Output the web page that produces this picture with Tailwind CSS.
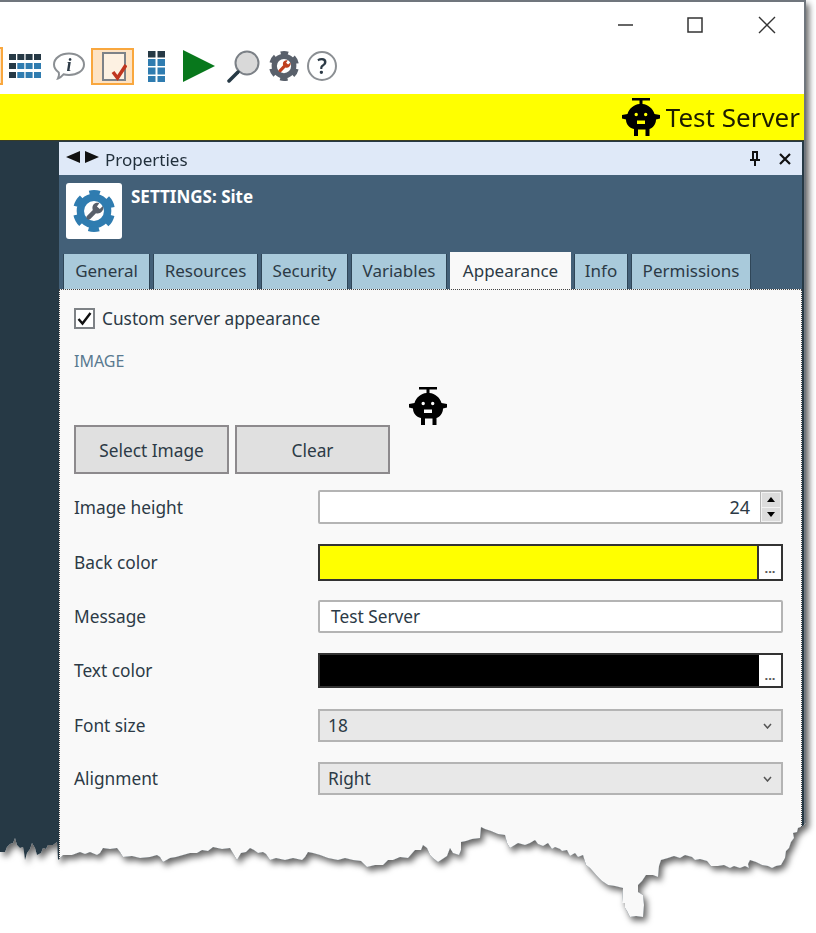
<!DOCTYPE html>
<html lang="en">
<head>
    <meta charset="UTF-8">
    <title>Settings: Site</title>
    <script src="https://cdn.jsdelivr.net/npm/@tailwindcss/browser@4"></script>
</head>
<body class="bg-white overflow-hidden font-['Noto_Sans',sans-serif] text-[#2c3a46]">
    <!-- shared shapes -->
    <svg width="0" height="0" class="absolute">
        <defs>
            <clipPath id="torn" clipPathUnits="userSpaceOnUse">
                <path d="M0 0H806V823L803 826L798 828L797 832L793 833L794 838L791 842L789 848L786 851L785 858L781 865L776 866L772 868L768 866L762 865L756 862L750 860L748 864L749 868L745 866L740 868L734 866L730 868L724 865L718 866L711 866L707 861L700 859L695 860L692 857L685 855L680 858L674 856L668 858L661 860L659 866L658 877L653 875L646 875L642 881L638 885L638 892L643 895L644 905L643 917L636 916L630 917L627 911L625 908L625 903L622 903L623 888L615 886L608 885L602 881L597 876L590 868L586 865L583 855L578 857L575 853L570 856L567 850L562 851L560 849L555 847L552 849L548 843L543 846L538 844L535 840L530 843L525 845L518 843L510 848L507 843L505 835L498 834L491 831L485 829L481 827L480 838L472 839L466 841L461 842L461 850L459 855L453 853L450 848L447 856L438 862L433 858L430 855L427 848L423 845L421 850L415 850L408 858L400 857L393 860L388 860L383 865L375 865L367 867L361 861L353 860L345 858L338 860L328 858L320 855L313 853L308 852L305 857L302 860L293 858L285 860L276 858L270 860L266 854L263 852L258 853L254 850L250 848L246 852L241 853L237 860L234 855L230 848L222 849L213 847L208 851L202 850L197 853L190 853L183 855L176 857L170 858L163 862L160 857L157 855L150 857L140 858L132 856L123 857L120 852L117 848L110 849L103 848L100 853L97 855L90 852L85 854L80 852L72 855L63 855L58 860L57 842L53 845L48 845L46 849L43 848L41 853L37 855L35 848L32 843L30 849L27 853L25 860L24 852L23 847L20 848L17 845L15 838L13 843L10 844L7 847L5 852L0 852Z"/>
            </clipPath>
            <symbol id="robot" viewBox="0 0 38 38">
                <path fill-rule="evenodd" d="M10 0H28V2.500H20.500V6C26 6.500 31 10.500 32.500 16L38 17V20.500L34 21.500C34 26 31 30 27.500 31V38H23.500V31.500H16V38H12V31C7 30 4 26 4 21.500L0 20.500V17L5.500 16C7 10.500 12 6.500 17.500 6V2.500H10ZM12.500 16.500A1.700 1.700 0 1 0 15.900 16.500A1.700 1.700 0 1 0 12.500 16.500ZM22 16.500A1.700 1.700 0 1 0 25.400 16.500A1.700 1.700 0 1 0 22 16.500ZM15 22.500H23V26H15Z"/>
            </symbol>
            <symbol id="gear" viewBox="0 0 40 40">
                <circle cx="20" cy="20" r="13" fill="none" stroke="currentColor" stroke-width="7"/>
                <circle cx="20" cy="20" r="17.500" fill="none" stroke="currentColor" stroke-width="5" stroke-dasharray="10 8.330" stroke-dashoffset="14.160"/>
            </symbol>
            <symbol id="wrench" viewBox="0 0 40 40">
                <path d="M25 12.500C22 11.500 18.500 13.500 18.500 17C18.500 17.800 18.600 18.500 18.900 19.100L13.500 24.500C12.500 25.500 12.500 26.900 13.500 27.700C14.300 28.500 15.500 28.500 16.500 27.500L21.900 22.100C25.500 23.300 28.800 20.500 28.800 17C28.800 16.300 28.700 15.700 28.500 15.200L25.500 18L22.800 15.700Z"/>
            </symbol>
        </defs>
    </svg>

    <div class="w-[816px] h-[933px] [filter:drop-shadow(3px_4px_3px_rgba(0,0,0,0.6))]">
        <div class="w-[806px] h-[933px] flex flex-col border-t-2 border-r-2 border-[#70767d] bg-white [clip-path:url(#torn)]">

            <!-- title bar + toolbar -->
            <div class="h-[92px] relative shrink-0">
                <div class="absolute top-[14px] left-[617px] flex">
                    <svg class="w-[17px] h-[18px] mr-[52px]" viewBox="0 0 17 18"><path d="M1 9H16" stroke="#333" stroke-width="1.500"/></svg>
                    <svg class="w-[18px] h-[18px] mr-[54px]" viewBox="0 0 18 18"><rect x="2" y="2" width="14" height="14" fill="none" stroke="#333" stroke-width="1.500"/></svg>
                    <svg class="w-[18px] h-[18px]" viewBox="0 0 18 18"><path d="M1 1L17 17M17 1L1 17" stroke="#333" stroke-width="1.400"/></svg>
                </div>
                <div class="absolute left-0 top-[45px] flex items-center h-[38px]">
                    <div class="w-[3px] h-[38px] bg-[#fde3c4] border-r-2 border-y-2 border-[#f9a73e] mr-[6px]"></div>
                    <svg class="w-[32px] h-[24px] mr-[12px]" viewBox="0 0 32 24">
                        <path fill="#263945" d="M0 0h7v6H0zM8.300 0h7v6h-7zM16.600 0h7v6h-7zM25 0h7v6h-7zM0 9h7v6H0zM0 18h7v6H0z"/>
                        <path fill="#2f7cb0" d="M8.300 9h7v6h-7zM16.600 9h7v6h-7zM25 9h7v6h-7zM8.300 18h7v6h-7zM16.600 18h7v6h-7zM25 18h7v6h-7z"/>
                    </svg>
                    <svg class="w-[32px] h-[28px] mr-[6px]" viewBox="0 0 32 28">
                        <path d="M16 1.500C24 1.500 31 6 31 12.500C31 19 24 23 16 23C14 23 12 22.800 10.500 22.300C9 24 7 26 5 26.500C6 24.500 6.300 22 5.800 20.500C3 18.500 1 16 1 12.500C1 6 8 1.500 16 1.500Z" fill="#fff" stroke="#8b8f93" stroke-width="2"/>
                        <text x="16" y="19" text-anchor="middle" font-family="Liberation Serif" font-style="italic" font-weight="700" font-size="18" fill="#2c3a46">i</text>
                    </svg>
                    <div class="w-[43px] h-[37px] bg-[#fde3c4] border-2 border-[#f9a73e] flex items-center justify-center mr-[14px]">
                        <svg class="w-[28px] h-[32px]" viewBox="0 0 28 32">
                            <rect x="4" y="3" width="22" height="27" fill="#fdf1e2" stroke="#7d8288" stroke-width="2"/>
                            <path d="M14 22L18.500 28L27 15" fill="none" stroke="#c0351f" stroke-width="3.500"/>
                        </svg>
                    </div>
                    <svg class="w-[17px] h-[31px] mr-[18px]" viewBox="0 0 17 31">
                        <path fill="#263945" d="M0 0h7.500v6.500H0zM9.500 0H17v6.500H9.500z"/>
                        <path fill="#2f7cb0" d="M0 8h7.500v7H0zM9.500 8H17v7H9.500zM0 16.500h7.500v7H0zM9.500 16.500H17v7H9.500zM0 25h7.500v6H0zM9.500 25H17v6H9.500z"/>
                    </svg>
                    <svg class="w-[32px] h-[32px] mr-[12px]" viewBox="0 0 32 32"><path d="M0 0L32 16L0 32Z" fill="#08781c"/></svg>
                    <svg class="w-[33px] h-[33px] mr-[9px]" viewBox="0 0 33 33">
                        <circle cx="20" cy="13" r="11.500" fill="#d9d9d9" stroke="#7b8086" stroke-width="2"/>
                        <path d="M11 22L2 31" stroke="#263945" stroke-width="3.500" stroke-linecap="round"/>
                    </svg>
                    <div class="relative w-[30px] h-[30px] mr-[8px] text-[#59606b]">
                        <svg class="w-[30px] h-[30px]"><use href="#gear"/></svg>
                        <svg class="absolute inset-0 w-[30px] h-[30px] fill-[#c0401f]"><use href="#wrench"/></svg>
                    </div>
                    <div class="w-[30px] h-[30px] rounded-full border-2 border-[#8b8f93] flex items-center justify-center text-[21px] font-semibold leading-none">?</div>
                </div>
            </div>

            <!-- server banner -->
            <div class="h-[47px] shrink-0 bg-[#ffff00] border-b border-[#3a3d22] flex items-center justify-end pr-[4px] gap-[6px] text-black">
                <svg class="w-[38px] h-[38px]"><use href="#robot"/></svg>
                <span class="text-[26px] leading-none text-[#1c1c00]">Test Server</span>
            </div>

            <!-- app body -->
            <div class="flex-1 bg-[#263945] pl-[59px] pr-[2px] pt-[1px]">
                <div class="h-full flex flex-col">
                    <!-- properties header -->
                    <div class="h-[33px] shrink-0 bg-[#dfe9f8] flex items-center pl-[7px] pr-[11px] text-[#22303c]">
                        <svg class="w-[33px] h-[12px] mr-[6px] -mt-[3px]" viewBox="0 0 33 12"><path d="M14 0V12L0 6ZM19 0V12L33 6Z" fill="#111"/></svg>
                        <span class="text-[17px] leading-none mt-[2px]">Properties</span>
                        <svg class="ml-auto w-[12px] h-[17px] mr-[18px] -mt-[1px]" viewBox="0 0 12 17"><path d="M3 1H9V9H11V11H7V16H5V11H1V9H3ZM5 3V9H7V3Z" fill="#111" fill-rule="evenodd"/></svg>
                        <svg class="w-[12px] h-[12px]" viewBox="0 0 12 12"><path d="M1 1L11 11M11 1L1 11" stroke="#111" stroke-width="2.200"/></svg>
                    </div>

                    <!-- settings header -->
                    <div class="h-[114px] shrink-0 bg-[#436078] flex flex-col justify-between">
                        <div class="flex pl-[7px] pt-[8px]">
                            <div class="relative w-[56px] h-[56px] rounded-[3px] bg-white flex items-center justify-center text-[#2f7cb0]">
                                <svg class="w-[42px] h-[42px]"><use href="#gear"/></svg>
                                <svg class="absolute w-[42px] h-[42px] fill-[#59606b]"><use href="#wrench"/></svg>
                            </div>
                            <span class="ml-[9px] mt-[2px] text-[17px] font-bold text-white leading-[24px]">SETTINGS: Site</span>
                        </div>
                        <div class="flex pl-[4px] gap-[3px] text-[17px] leading-none">
                            <div class="w-[87px] h-[35px] pb-[3px] bg-[#a9cadb] border-x border-[#2f4658] flex items-center justify-center">General</div>
                            <div class="w-[105px] h-[35px] pb-[3px] bg-[#a9cadb] border-x border-[#2f4658] flex items-center justify-center">Resources</div>
                            <div class="w-[87px] h-[35px] pb-[3px] bg-[#a9cadb] border-x border-[#2f4658] flex items-center justify-center">Security</div>
                            <div class="w-[96px] h-[35px] pb-[3px] bg-[#a9cadb] border-x border-[#2f4658] flex items-center justify-center">Variables</div>
                            <div class="w-[121px] h-[37px] -mt-[2px] pb-[1px] bg-[#f9f9f9] flex items-center justify-center">Appearance</div>
                            <div class="w-[54px] h-[35px] pb-[3px] bg-[#a9cadb] border-x border-[#2f4658] flex items-center justify-center">Info</div>
                            <div class="w-[120px] h-[35px] pb-[3px] bg-[#a9cadb] border-x border-[#2f4658] flex items-center justify-center">Permissions</div>
                        </div>
                    </div>

                    <!-- appearance form -->
                    <div class="flex-1 bg-[#f9f9f9] border-t border-x border-dotted border-[#444] pl-[14px] pt-[17px] text-[17.300px] leading-none">
                        <label class="flex items-center h-[22px]">
                            <span class="w-[21px] h-[21px] bg-white border-2 border-[#7e8286] flex items-center justify-center mr-[7px]">
                                <svg class="w-[15px] h-[15px]" viewBox="0 0 15 15"><path d="M1.500 8L5.500 12.500L13.500 2" fill="none" stroke="#111" stroke-width="2.400"/></svg>
                            </span>
                            <span class="mt-[2px]">Custom server appearance</span>
                        </label>
                        <div class="mt-[24px] text-[16px] text-[#5a7a90]">IMAGE</div>
                        <div class="pl-[335px] mt-[18px] h-[38px]">
                            <svg class="w-[38px] h-[38px] text-black"><use href="#robot"/></svg>
                        </div>
                        <div class="flex gap-[6px]">
                            <div class="w-[155px] h-[49px] pt-[2px] bg-[#e0e0e0] border-2 border-[#8d8a8d] flex items-center justify-center">Select Image</div>
                            <div class="w-[155px] h-[49px] pt-[2px] bg-[#e0e0e0] border-2 border-[#8d8a8d] flex items-center justify-center">Clear</div>
                        </div>

                        <div class="mt-[16px] grid grid-cols-[244px_465px] items-center">
                            <div class="mt-[2px]">Image height</div>
                            <div class="h-[34px] flex bg-white border-2 border-[#b4b4b4] rounded-[2px]">
                                <div class="flex-1 flex items-center justify-end pr-[10px] text-[18px]">24</div>
                                <div class="w-[21px] flex flex-col gap-[1px] bg-[#f3f3f3] border-l border-[#b4b4b4] p-[1px]">
                                    <div class="flex-1 bg-[#dcdcdc] flex items-center justify-center"><div class="border-x-[4px] border-b-[5px] border-x-transparent border-b-black"></div></div>
                                    <div class="flex-1 bg-[#dcdcdc] flex items-center justify-center"><div class="border-x-[4px] border-t-[5px] border-x-transparent border-t-black"></div></div>
                                </div>
                            </div>
                        </div>
                        <div class="mt-[20px] grid grid-cols-[244px_465px] items-center">
                            <div class="mt-[1px]">Back color</div>
                            <div class="h-[37px] flex border-2 border-[#333]">
                                <div class="flex-1 bg-[#ffff00] border-r-2 border-[#333]"></div>
                                <div class="w-[22px] bg-white text-[#555] text-[13px] font-bold flex items-end justify-center pb-[4px]">...</div>
                            </div>
                        </div>
                        <div class="mt-[19px] grid grid-cols-[244px_465px] items-center">
                            <div>Message</div>
                            <div class="h-[33px] flex items-center pl-[11px] bg-white border-2 border-[#b4b4b4] rounded-[2px]">Test Server</div>
                        </div>
                        <div class="mt-[20px] grid grid-cols-[244px_465px] items-center">
                            <div class="mt-[1px]">Text color</div>
                            <div class="h-[35px] flex border-2 border-[#333]">
                                <div class="flex-1 bg-black"></div>
                                <div class="w-[22px] bg-white text-[#555] text-[13px] font-bold flex items-end justify-center pb-[4px]">...</div>
                            </div>
                        </div>
                        <div class="mt-[21px] grid grid-cols-[244px_465px] items-center">
                            <div>Font size</div>
                            <div class="h-[33px] flex items-center justify-between pl-[8px] pr-[9px] bg-[#e8e8e8] border-2 border-[#b4b4b4]">
                                18
                                <svg class="w-[9px] h-[6px]" viewBox="0 0 9 6"><path d="M1 1L4.500 5L8 1" fill="none" stroke="#555" stroke-width="1.500"/></svg>
                            </div>
                        </div>
                        <div class="mt-[20px] grid grid-cols-[244px_465px] items-center">
                            <div>Alignment</div>
                            <div class="h-[33px] flex items-center justify-between pl-[8px] pr-[9px] bg-[#e8e8e8] border-2 border-[#b4b4b4]">
                                Right
                                <svg class="w-[9px] h-[6px]" viewBox="0 0 9 6"><path d="M1 1L4.500 5L8 1" fill="none" stroke="#555" stroke-width="1.500"/></svg>
                            </div>
                        </div>
                    </div>
                </div>
            </div>
        </div>
    </div>
</body>
</html>
